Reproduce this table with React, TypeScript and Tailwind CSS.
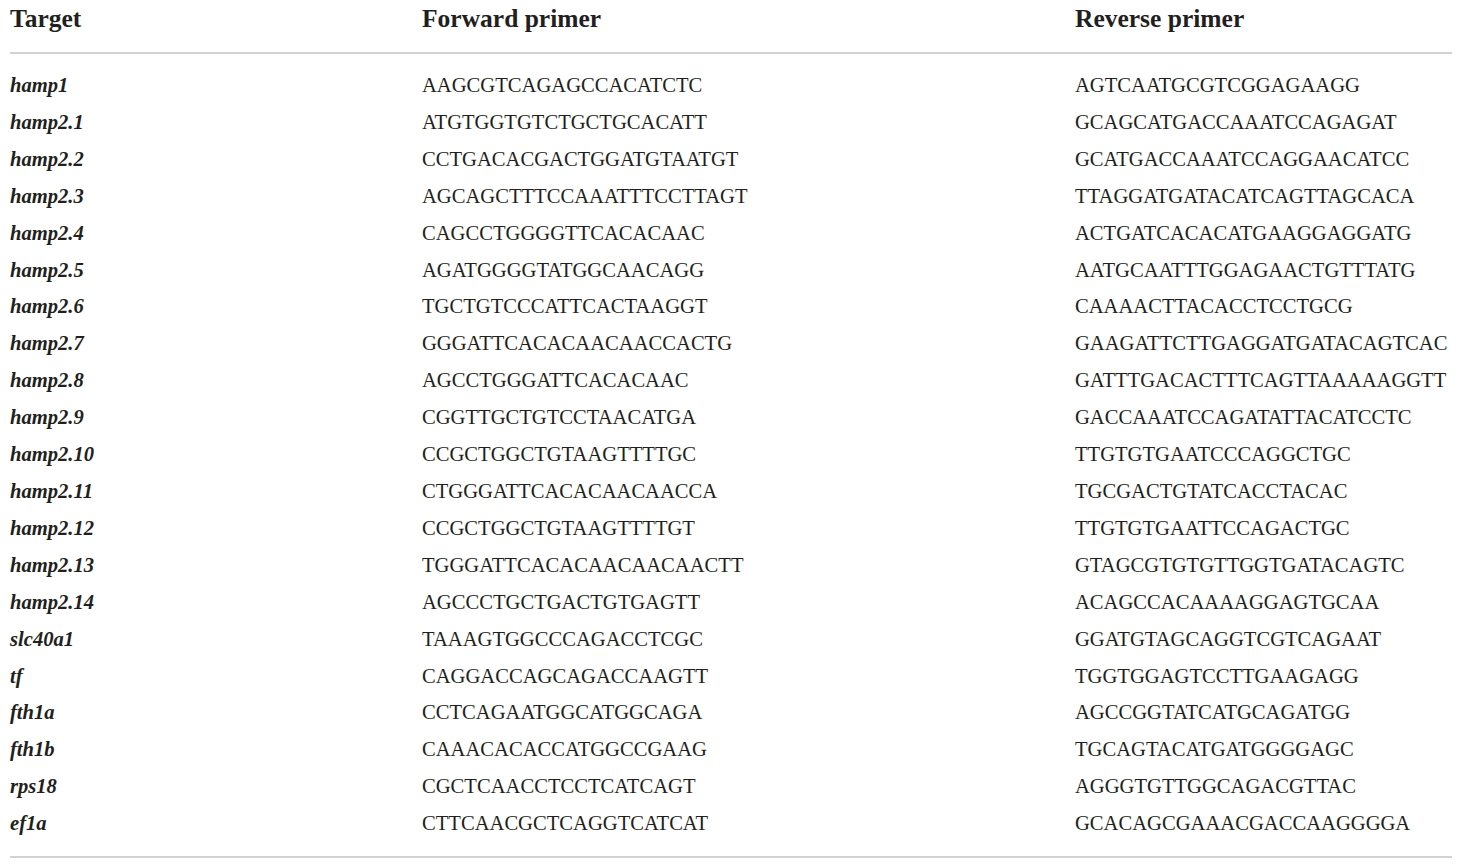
const rows: [string, string, string][] = [
  ["hamp1", "AAGCGTCAGAGCCACATCTC", "AGTCAATGCGTCGGAGAAGG"],
  ["hamp2.1", "ATGTGGTGTCTGCTGCACATT", "GCAGCATGACCAAATCCAGAGAT"],
  ["hamp2.2", "CCTGACACGACTGGATGTAATGT", "GCATGACCAAATCCAGGAACATCC"],
  ["hamp2.3", "AGCAGCTTTCCAAATTTCCTTAGT", "TTAGGATGATACATCAGTTAGCACA"],
  ["hamp2.4", "CAGCCTGGGGTTCACACAAC", "ACTGATCACACATGAAGGAGGATG"],
  ["hamp2.5", "AGATGGGGTATGGCAACAGG", "AATGCAATTTGGAGAACTGTTTATG"],
  ["hamp2.6", "TGCTGTCCCATTCACTAAGGT", "CAAAACTTACACCTCCTGCG"],
  ["hamp2.7", "GGGATTCACACAACAACCACTG", "GAAGATTCTTGAGGATGATACAGTCAC"],
  ["hamp2.8", "AGCCTGGGATTCACACAAC", "GATTTGACACTTTCAGTTAAAAAGGTT"],
  ["hamp2.9", "CGGTTGCTGTCCTAACATGA", "GACCAAATCCAGATATTACATCCTC"],
  ["hamp2.10", "CCGCTGGCTGTAAGTTTTGC", "TTGTGTGAATCCCAGGCTGC"],
  ["hamp2.11", "CTGGGATTCACACAACAACCA", "TGCGACTGTATCACCTACAC"],
  ["hamp2.12", "CCGCTGGCTGTAAGTTTTGT", "TTGTGTGAATTCCAGACTGC"],
  ["hamp2.13", "TGGGATTCACACAACAACAACTT", "GTAGCGTGTGTTGGTGATACAGTC"],
  ["hamp2.14", "AGCCCTGCTGACTGTGAGTT", "ACAGCCACAAAAGGAGTGCAA"],
  ["slc40a1", "TAAAGTGGCCCAGACCTCGC", "GGATGTAGCAGGTCGTCAGAAT"],
  ["tf", "CAGGACCAGCAGACCAAGTT", "TGGTGGAGTCCTTGAAGAGG"],
  ["fth1a", "CCTCAGAATGGCATGGCAGA", "AGCCGGTATCATGCAGATGG"],
  ["fth1b", "CAAACACACCATGGCCGAAG", "TGCAGTACATGATGGGGAGC"],
  ["rps18", "CGCTCAACCTCCTCATCAGT", "AGGGTGTTGGCAGACGTTAC"],
  ["ef1a", "CTTCAACGCTCAGGTCATCAT", "GCACAGCGAAACGACCAAGGGGA"],
];

export default function App() {
  return (
    <div className="w-[1460px] h-[865px] bg-white text-[#231f20] font-['Liberation_Serif',serif]">
      <div className="mx-[10px] w-[1442px]">
        {/* Header */}
        <div className="grid grid-cols-[412px_653px_1fr] h-[54px] pt-[4px] text-[25.5px] leading-[30px] font-bold border-b-2 border-[#d2d2d2]">
          <div>Target</div>
          <div>Forward primer</div>
          <div>Reverse primer</div>
        </div>

        {/* Body */}
        <div className="pt-[13px] pb-[14px] border-b-2 border-[#d2d2d2]">
          {rows.map(([target, fwd, rev]) => (
            <div
              key={target}
              className="grid grid-cols-[412px_653px_1fr] text-[20.6px] leading-[36.9px] whitespace-nowrap"
            >
              <div className="font-bold italic">{target}</div>
              <div>{fwd}</div>
              <div>{rev}</div>
            </div>
          ))}
        </div>
      </div>
    </div>
  );
}
